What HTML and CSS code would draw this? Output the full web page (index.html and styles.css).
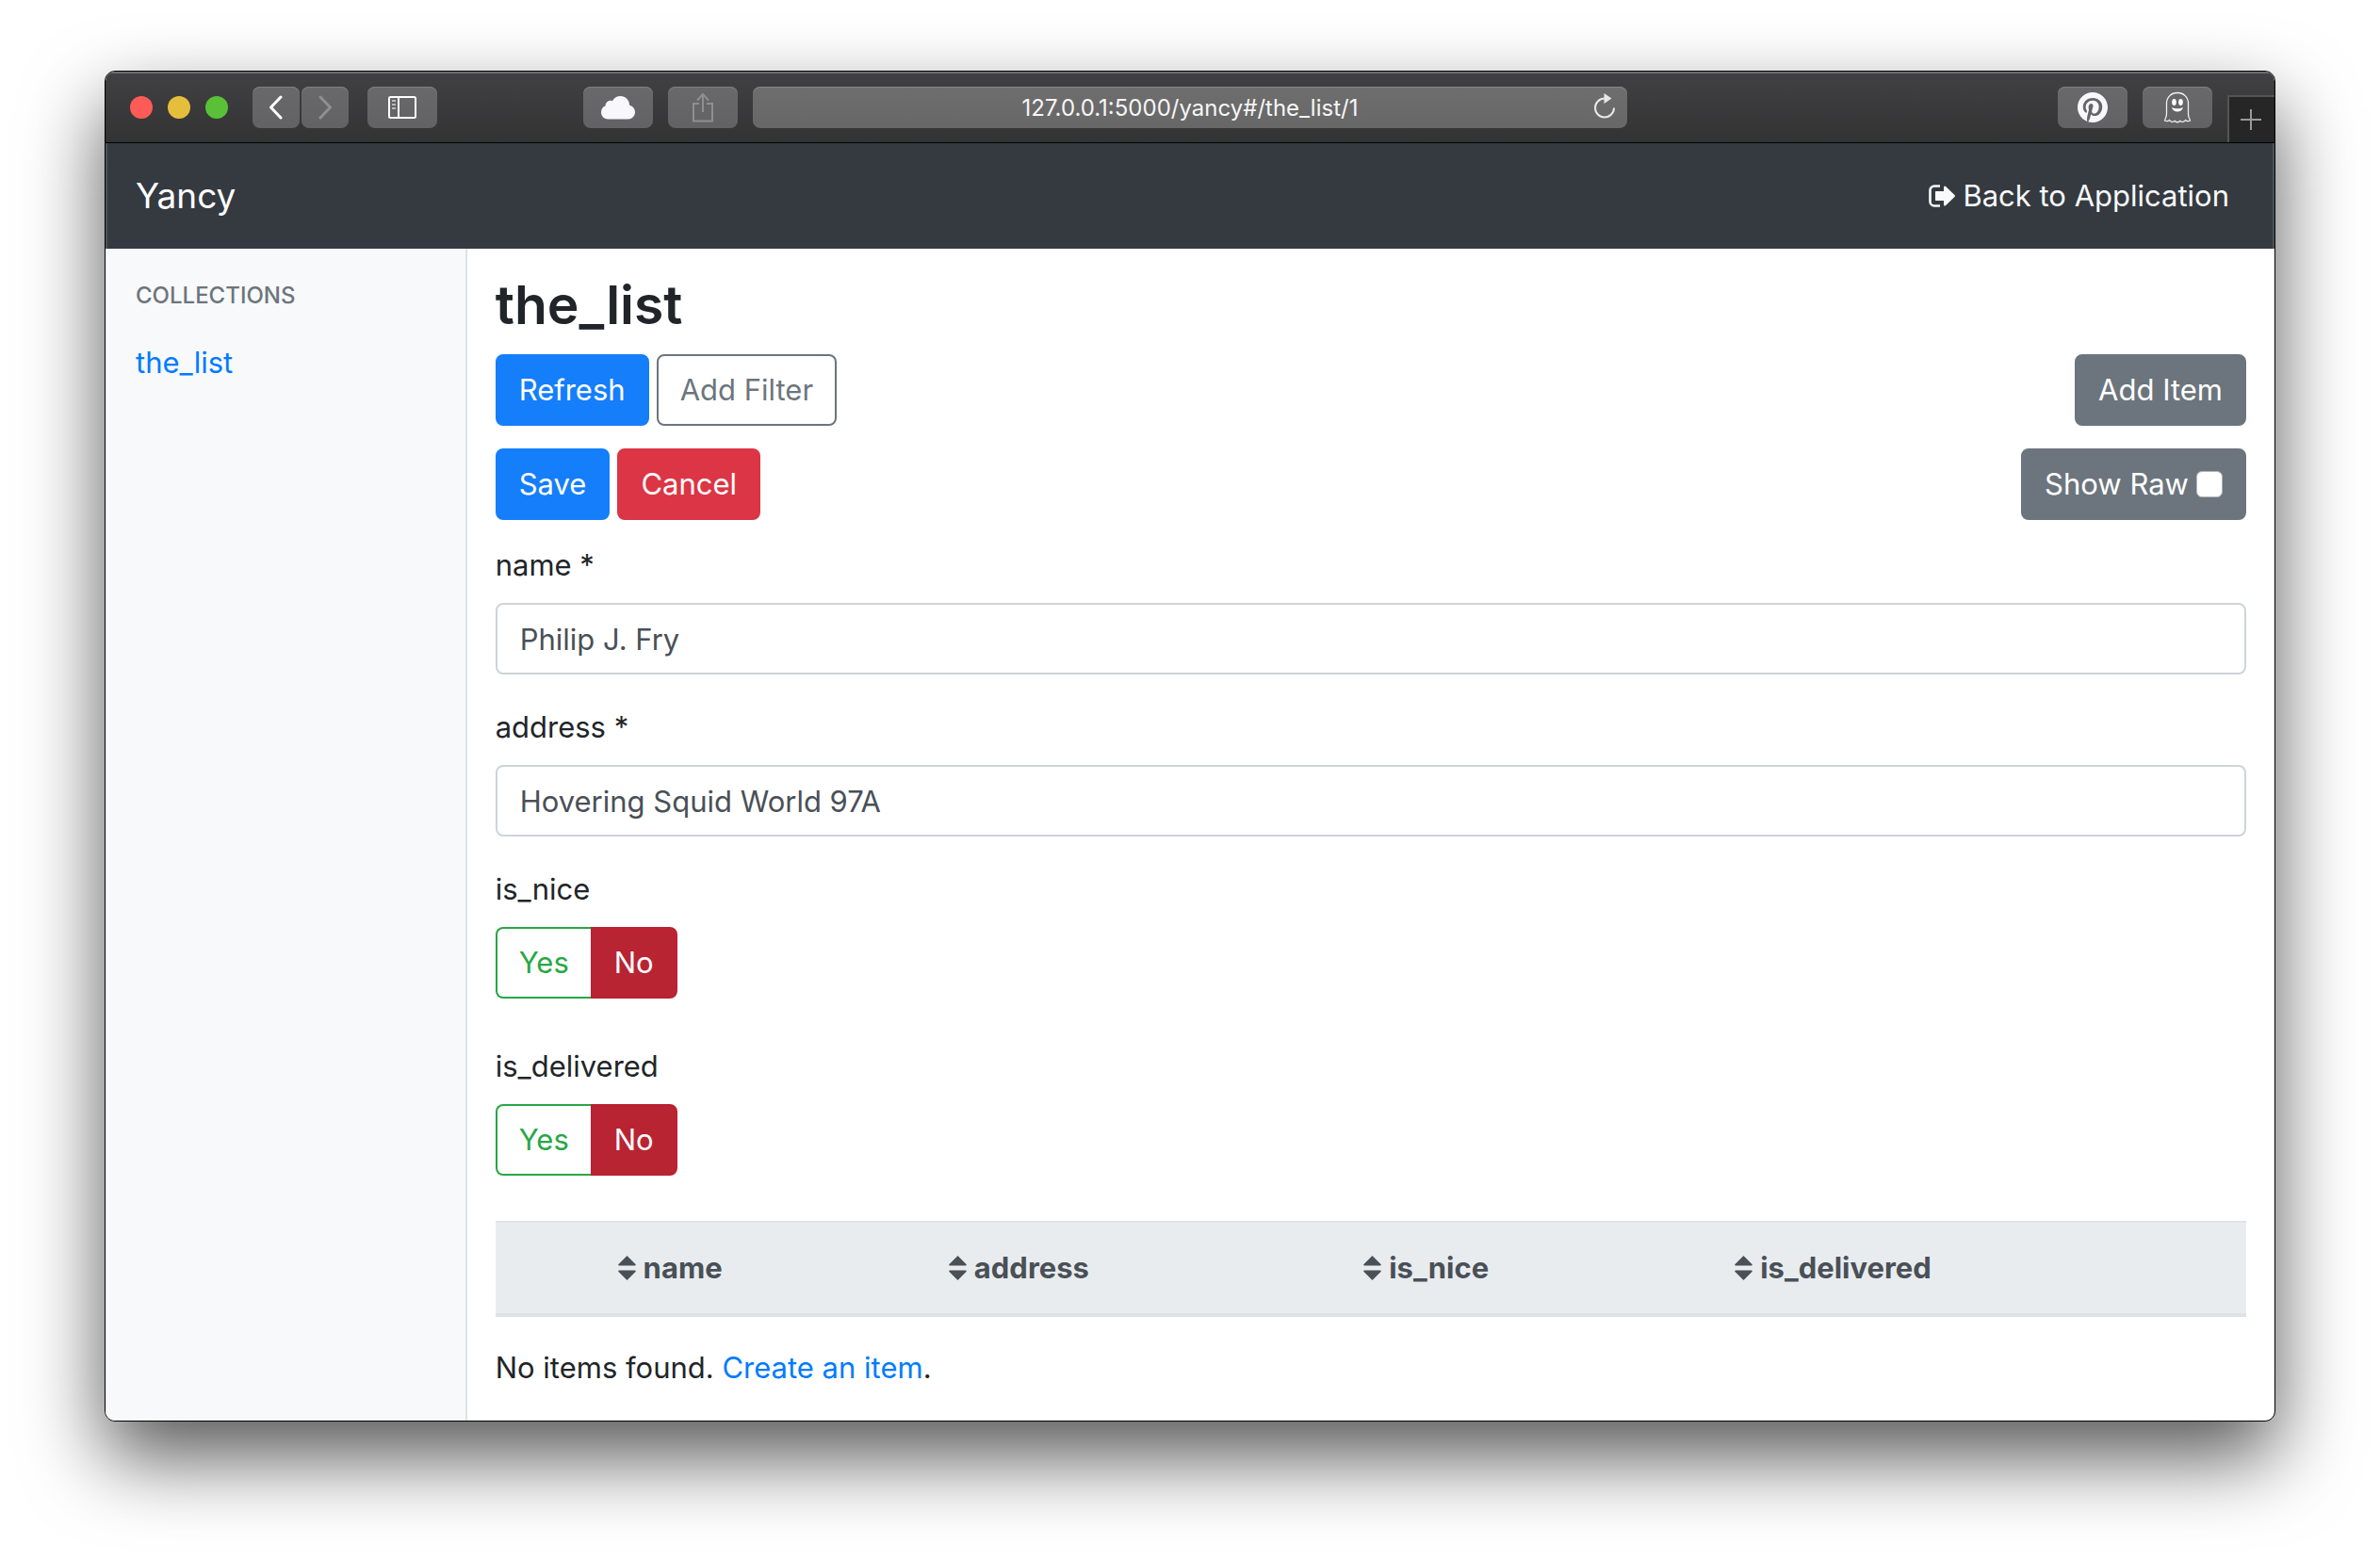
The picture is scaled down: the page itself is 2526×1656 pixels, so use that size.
FILE: index.html
```html
<!DOCTYPE html>
<html lang="en">
<head>
<meta charset="utf-8">
<title>Yancy</title>
<meta name="viewport" content="width=device-width, initial-scale=1">
<link rel="stylesheet" href="styles.css">
</head>
<body>
<div class="window">
  <div class="toolbar">
    <div class="tools tools-start">
      <div class="lights">
        <button class="light light-close" type="button" aria-label="Close"></button>
        <button class="light light-min" type="button" aria-label="Minimize"></button>
        <button class="light light-max" type="button" aria-label="Zoom"></button>
      </div>
      <div class="history">
        <button class="tool tool-narrow" type="button" aria-label="Back">
          <svg width="16" height="26" viewBox="0 0 16 26" fill="none" stroke="#fff" stroke-width="3" stroke-linecap="round" stroke-linejoin="round"><path d="M13 2 2.500 13 13 24"/></svg>
        </button>
        <button class="tool tool-narrow" type="button" aria-label="Forward">
          <svg width="16" height="26" viewBox="0 0 16 26" fill="none" stroke="#8f8f91" stroke-width="3" stroke-linecap="round" stroke-linejoin="round"><path d="M3 2 13.500 13 3 24"/></svg>
        </button>
      </div>
      <button class="tool" type="button" aria-label="Show sidebar">
        <svg width="30" height="24" viewBox="0 0 30 24" fill="none" stroke="#fff" stroke-width="2"><rect x="1" y="1" width="28" height="22" rx="1.500"/><path d="M11 1v22"/><path d="M4 5h4M4 9h4M4 13h4" stroke="#b9b9bb"/></svg>
      </button>
      <div class="share-tools">
        <button class="tool" type="button" aria-label="iCloud tabs">
          <svg width="36" height="26" viewBox="0 0 36 26" fill="#f8f8fc"><path d="M7.500 25.500C3.300 25.500 0 22.400 0 18.300c0-3.400 2-6 4.700-7C4.400 7.600 8.500 4.800 12 6.200 13.700 2.900 17 1 20.500 1c5.300 0 9.500 4.200 9.700 9.700 3.400.9 5.800 3.800 5.800 7.300 0 4.200-3.300 7.500-7.400 7.500z"/></svg>
        </button>
        <button class="tool" type="button" aria-label="Share">
          <svg width="24" height="32" viewBox="0 0 24 32" fill="none" stroke="#8f8f91" stroke-width="2"><path d="M8 12H2v18.500h20V12h-6"/><path d="M12 21V3M6 8.500l6-6.500 6 6.500"/></svg>
        </button>
      </div>
    </div>
    <div class="address">
      <input class="address-input" type="text" aria-label="Address" value="127.0.0.1:5000/yancy#/the_list/1">
      <button class="reload" type="button" aria-label="Reload">
        <svg width="24" height="28" viewBox="0 0 24 28" fill="none" stroke="#e8e8e8" stroke-width="2"><path d="M12 5.500a10 10 0 1 0 10 10"/><path d="M11.500 0 19.500 5.500l-8 5.500z" fill="#e8e8e8" stroke="none"/></svg>
      </button>
    </div>
    <div class="tools tools-end">
      <button class="tool" type="button" aria-label="Pinterest">
        <svg width="32" height="32" viewBox="0 8 496 496" fill="#f8f8fc"><path d="M496 256c0 137-111 248-248 248-25.600 0-50.200-3.900-73.400-11.100 10.100-16.500 25.200-43.500 30.800-65 3-11.600 15.400-59 15.400-59 8.100 15.400 31.700 28.500 56.800 28.500 74.800 0 128.700-68.800 128.700-154.300 0-81.900-66.900-143.200-152.900-143.200-107 0-163.900 71.800-163.900 150.100 0 36.400 19.400 81.700 50.300 96.100 4.700 2.200 7.200 1.200 8.300-3.300.8-3.400 5-20.300 6.900-28.100.6-2.500.3-4.700-1.700-7.100-10.100-12.500-18.300-35.300-18.300-56.600 0-54.700 41.400-107.600 112-107.600 60.900 0 103.600 41.500 103.600 100.900 0 67.100-33.900 113.600-78 113.600-24.300 0-42.600-20.100-36.700-44.800 7-29.500 20.500-61.300 20.500-82.600 0-19-10.200-34.900-31.400-34.900-24.900 0-44.900 25.700-44.900 60.200 0 22 7.400 36.800 7.400 36.800s-24.500 103.800-29 123.200c-5 21.400-3 51.600-.9 71.200C65.400 450.900 0 361.100 0 256 0 119 111 8 248 8s248 111 248 248z"/></svg>
      </button>
      <button class="tool" type="button" aria-label="Ghostery">
        <svg width="30" height="34" viewBox="0 0 30 34" fill="none" stroke="#f0f0f2" stroke-width="1.300"><path d="M3.500 13C3.500 6 8.500 1.500 15 1.500S26.500 6 26.500 13v11c0 3 1 5 2 7-1.500.8-3.500.8-5-.5-1.300 2.200-4 2.600-5.500.8-1.800 1.700-4.200 1.700-6 0-1.500 1.800-4.200 1.400-5.500-.8-1.500 1.300-3.500 1.300-5 .5 1-2 2-4 2-7z"/><g fill="#fff" stroke="none"><ellipse cx="11.500" cy="11.500" rx="2.300" ry="3.400"/><ellipse cx="18.500" cy="11.500" rx="2.300" ry="3.400"/><path d="M9 17c3.500 1.800 8.500 1.800 12 0-.8 3-3.300 4.500-6 4.500S9.800 20 9 17z"/></g></svg>
      </button>
      <button class="new-tab" type="button" aria-label="New tab">
        <svg width="22" height="22" viewBox="0 0 22 22" stroke="#9a9a9a" stroke-width="2"><path d="M11 0v22M0 11h22"/></svg>
      </button>
    </div>
  </div>

  <header class="navbar">
    <a class="brand" href="#">Yancy</a>
    <a class="back-link" href="#">
      <svg width="28" height="24" viewBox="0 0 28 24"><path d="M12 1.500H6A4.500 4.500 0 0 0 1.500 6v12A4.500 4.500 0 0 0 6 22.500h6" fill="none" stroke="#f8f9fa" stroke-width="2.600"/><path d="M8 7h8V3c0-1.500 1.200-2 2.200-1l9.300 9c.6.600.6 1.300 0 1.900l-9.300 9c-1 1-2.200.5-2.200-1V17H8c-.6 0-1-.4-1-1V8c0-.6.4-1 1-1z" fill="#f8f9fa"/></svg>
      <span>Back to Application</span>
    </a>
  </header>

  <div class="layout">
    <nav class="sidebar">
      <h6 class="sidebar-title">Collections</h6>
      <a class="sidebar-link" href="#/the_list">the_list</a>
    </nav>

    <main class="content">
      <h2 class="title">the_list</h2>
      <div class="actions">
        <button class="btn btn-primary" type="button">Refresh</button>
        <button class="btn btn-outline" type="button">Add Filter</button>
        <button class="btn btn-secondary push-end" type="button">Add Item</button>
      </div>

      <form class="item-form">
        <div class="actions">
          <button class="btn btn-primary" type="button">Save</button>
          <button class="btn btn-danger" type="button">Cancel</button>
          <label class="btn btn-secondary btn-check push-end" for="show-raw">Show Raw <input class="check" id="show-raw" type="checkbox"></label>
        </div>
        <div class="field">
          <label class="label" for="name">name *</label>
          <input class="input" id="name" type="text" value="Philip J. Fry">
        </div>
        <div class="field">
          <label class="label" for="address">address *</label>
          <input class="input" id="address" type="text" value="Hovering Squid World 97A">
        </div>
        <div class="field field-toggle">
          <span class="label" id="nice-label">is_nice</span>
          <div class="toggle" role="group" aria-labelledby="nice-label">
            <button class="btn toggle-yes" type="button" aria-pressed="false">Yes</button>
            <button class="btn toggle-no" type="button" aria-pressed="true">No</button>
          </div>
        </div>
        <div class="field field-toggle">
          <span class="label" id="delivered-label">is_delivered</span>
          <div class="toggle" role="group" aria-labelledby="delivered-label">
            <button class="btn toggle-yes" type="button" aria-pressed="false">Yes</button>
            <button class="btn toggle-no" type="button" aria-pressed="true">No</button>
          </div>
        </div>
      </form>

      <table class="items">
        <colgroup><col class="col-toggle"><col class="col-name"><col class="col-address"><col class="col-nice"><col class="col-delivered"></colgroup>
        <thead>
          <tr>
            <th></th>
            <th><span class="sort"><svg width="19" height="26" viewBox="0 0 19 26" fill="#495057"><path d="M9.500 0 18.500 9c.6.700.2 1.500-.6 1.500H1.100C.3 10.500-.1 9.700.5 9zM9.500 26l9-9c.6-.7.2-1.500-.6-1.500H1.100c-.8 0-1.200.8-.6 1.500z"/></svg>name</span></th>
            <th><span class="sort"><svg width="19" height="26" viewBox="0 0 19 26" fill="#495057"><path d="M9.500 0 18.500 9c.6.700.2 1.500-.6 1.500H1.100C.3 10.500-.1 9.700.5 9zM9.500 26l9-9c.6-.7.2-1.500-.6-1.500H1.100c-.8 0-1.200.8-.6 1.500z"/></svg>address</span></th>
            <th><span class="sort"><svg width="19" height="26" viewBox="0 0 19 26" fill="#495057"><path d="M9.500 0 18.500 9c.6.700.2 1.500-.6 1.500H1.100C.3 10.500-.1 9.700.5 9zM9.500 26l9-9c.6-.7.2-1.500-.6-1.500H1.100c-.8 0-1.200.8-.6 1.500z"/></svg>is_nice</span></th>
            <th><span class="sort"><svg width="19" height="26" viewBox="0 0 19 26" fill="#495057"><path d="M9.500 0 18.500 9c.6.700.2 1.500-.6 1.500H1.100C.3 10.500-.1 9.700.5 9zM9.500 26l9-9c.6-.7.2-1.500-.6-1.500H1.100c-.8 0-1.200.8-.6 1.500z"/></svg>is_delivered</span></th>
          </tr>
        </thead>
      </table>
      <p class="empty">No items found. <a class="link" href="#">Create an item</a>.</p>
    </main>
  </div>
</div>
</body>
</html>
```
FILE: styles.css
```css
* {
  box-sizing: border-box;
}

body {
  margin: 0;
  padding: 75px 111px 147px;
  background: #fff;
  color: #212529;
  font: 400 31px/48px Inter, "Liberation Sans", sans-serif;
}

button,
input {
  font: inherit;
}

button {
  cursor: pointer;
}

svg {
  display: block;
  flex: none;
}

.window {
  overflow: hidden;
  border: 1px solid #000;
  border-radius: 11px;
  background: #fff;
  box-shadow: 0 38px 84px rgba(0, 0, 0, 0.66);
}

/* Browser toolbar */
.toolbar {
  display: grid;
  grid-template-columns: minmax(0, 1fr) minmax(0, 928px) minmax(0, 1fr);
  column-gap: 16px;
  padding: 16px 0 15px;
  border-bottom: 1px solid #000;
  background: linear-gradient(#414143, #333334);
  box-shadow: inset 0 2px #6c6e6c;
}

.tools {
  display: flex;
  align-items: center;
}

.tools-start {
  padding-left: 26px;
}

.tools-end {
  justify-content: flex-end;
  gap: 16px;
}

.lights {
  display: flex;
  gap: 16px;
  margin-right: 26px;
}

.light {
  width: 24px;
  height: 24px;
  padding: 0;
  border: 0;
  border-radius: 50%;
}

.light-close {
  background: #fe5b57;
}

.light-min {
  background: #e5bf3c;
}

.light-max {
  background: #59c038;
}

.history {
  display: flex;
  gap: 2px;
  margin-right: 20px;
}

.share-tools {
  display: flex;
  gap: 16px;
  margin-left: auto;
}

.tool {
  display: flex;
  align-items: center;
  justify-content: center;
  width: 74px;
  height: 44px;
  padding: 0;
  border: 0;
  border-radius: 8px;
  background: linear-gradient(#69696b, #626264);
  box-shadow: inset 0 1px #808082;
}

.tool-narrow {
  width: 50px;
}

.address {
  position: relative;
}

.address-input {
  display: block;
  width: 100%;
  height: 44px;
  padding: 2px 48px 0;
  border: 0;
  border-radius: 8px;
  background: linear-gradient(#6e6e6e, #676767);
  box-shadow: inset 0 1px #868686;
  color: #f6f6f6;
  font-size: 24px;
  text-align: center;
}

.reload {
  position: absolute;
  top: 7px;
  right: 12px;
  padding: 0;
  border: 0;
  background: none;
}

.new-tab {
  display: flex;
  align-items: center;
  justify-content: center;
  align-self: flex-end;
  width: 50px;
  height: 50px;
  margin-bottom: -15px;
  padding: 0 2px 0 0;
  border: solid #555;
  border-width: 2px 0 0 2px;
  background: #262626;
}

/* Application header */
.navbar {
  display: flex;
  align-items: center;
  justify-content: space-between;
  padding: 32px 48px 32px 32px;
  background: #343a40;
  box-shadow: inset 2px 0 #4d5357, inset -2px 0 #4d5357;
}

.brand {
  color: #fff;
  font-size: 37px;
  text-decoration: none;
}

.back-link {
  display: flex;
  align-items: center;
  gap: 8px;
  color: #f8f9fa;
  text-decoration: none;
}

/* Page body */
.layout {
  display: grid;
  grid-template-columns: minmax(0, 1fr) minmax(0, 5fr);
}

.sidebar {
  padding: 33px 32px;
  border-right: 2px solid #dee2e6;
  background: #f8f9fa;
}

.sidebar-title {
  margin: 0 0 30px;
  color: #6c757d;
  font-size: 24px;
  font-weight: 500;
  line-height: 34px;
  text-transform: uppercase;
}

.sidebar-link {
  display: block;
}

.sidebar-link,
.link {
  color: #007bff;
  text-decoration: none;
}

.content {
  padding: 22px 30px 32px;
}

.title {
  margin: 0 0 14px;
  font-size: 57px;
  font-weight: 600;
  line-height: 76px;
}

.actions {
  display: flex;
  gap: 8px;
  margin-bottom: 24px;
}

.push-end {
  margin-left: auto;
}

.btn {
  padding: 12px 23px;
  border: 2px solid transparent;
  border-radius: 8px;
  line-height: 48px;
}

.btn-primary {
  border-color: #157efb;
  background: #157efb;
  color: #fff;
}

.btn-danger {
  border-color: #dc3545;
  background: #dc3545;
  color: #fff;
}

.btn-secondary {
  border-color: #6c757d;
  background: #6c757d;
  color: #fff;
}

.btn-outline {
  border-color: #6c757d;
  background: #fff;
  color: #6c757d;
}

.btn-check {
  display: flex;
  align-items: center;
  gap: 8px;
  cursor: pointer;
}

.check {
  appearance: none;
  width: 28px;
  height: 28px;
  margin: 0;
  border: 1px solid #b4b4b4;
  border-radius: 6px;
  background: #fff;
}

.check:checked {
  border: 8px solid #fff;
  background: #157efb;
}

.field {
  display: flex;
  flex-direction: column;
  align-items: flex-start;
  gap: 16px;
  margin-bottom: 32px;
}

.field-toggle {
  margin-bottom: 48px;
}

.input {
  width: 100%;
  height: 76px;
  padding: 12px 24px;
  border: 2px solid #ced4da;
  border-radius: 8px;
  background: #fff;
  color: #495057;
}

.toggle {
  display: flex;
}

.toggle-yes {
  border-color: #28a745;
  border-right: 0;
  border-radius: 8px 0 0 8px;
  background: #fff;
  color: #28a745;
}

.toggle-no {
  border-color: #b92233;
  border-radius: 0 8px 8px 0;
  background: #b92433;
  color: #fff;
}

/* Item list */
.items {
  width: 100%;
  border-collapse: separate;
  border-spacing: 0;
  table-layout: fixed;
}

.items th {
  padding: 24px;
  border: solid #dee2e6;
  border-width: 2px 0 4px;
  background: #e9ecef;
  color: #495057;
  font-weight: 700;
  text-align: left;
}

.col-toggle {
  width: 5.7%;
}

.col-name {
  width: 18.9%;
}

.col-address {
  width: 23.7%;
}

.col-nice {
  width: 21.2%;
}

.sort {
  display: flex;
  align-items: center;
  gap: 8px;
}

.empty {
  margin: 30px 0 0;
}
```
